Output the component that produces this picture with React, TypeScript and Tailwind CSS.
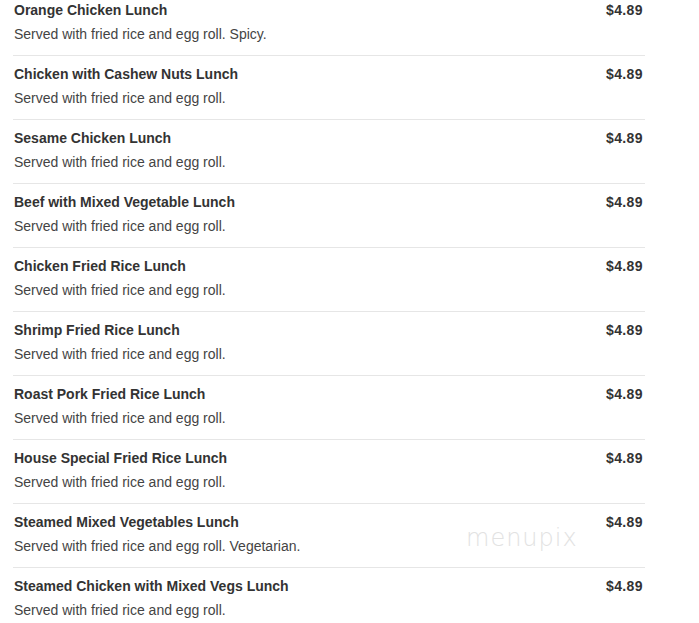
import React from "react";

const items: { name: string; desc: string }[] = [
  { name: "Orange Chicken Lunch", desc: "Served with fried rice and egg roll. Spicy." },
  { name: "Chicken with Cashew Nuts Lunch", desc: "Served with fried rice and egg roll." },
  { name: "Sesame Chicken Lunch", desc: "Served with fried rice and egg roll." },
  { name: "Beef with Mixed Vegetable Lunch", desc: "Served with fried rice and egg roll." },
  { name: "Chicken Fried Rice Lunch", desc: "Served with fried rice and egg roll." },
  { name: "Shrimp Fried Rice Lunch", desc: "Served with fried rice and egg roll." },
  { name: "Roast Pork Fried Rice Lunch", desc: "Served with fried rice and egg roll." },
  { name: "House Special Fried Rice Lunch", desc: "Served with fried rice and egg roll." },
  { name: "Steamed Mixed Vegetables Lunch", desc: "Served with fried rice and egg roll. Vegetarian." },
  { name: "Steamed Chicken with Mixed Vegs Lunch", desc: "Served with fried rice and egg roll." },
];

export default function App() {
  return (
    <div
      className="relative w-[699px] h-[623px] overflow-hidden bg-white"
      style={{ fontFamily: '"Liberation Sans", Arial, sans-serif' }}
    >
      <div className="ml-[13px] w-[632px] flex flex-col">
        {items.map((it, i) => (
          <div
            key={i}
            className={`flex justify-between ${i === 0 ? "pt-0" : "pt-[8px]"} pb-[11px] ${
              i === items.length - 1 ? "" : "border-b border-[#e6e6e6]"
            }`}
          >
            <div className="flex flex-col pl-[1px]">
              <div className="text-[14px] leading-[20px] font-bold text-[#333]">{it.name}</div>
              <div className="mt-[4px] text-[14px] leading-[20px] text-[#444]">{it.desc}</div>
            </div>
            <div className="text-[14px] leading-[20px] font-bold text-[#333] pr-[2px] tracking-[0.4px]">$4.89</div>
          </div>
        ))}
      </div>
      <div
        className="absolute left-[466px] top-[526px] text-[24px] leading-[24px] text-[#e2e2e2] tracking-[1px]"
        style={{ fontFamily: '"DejaVu Sans", sans-serif', fontWeight: 200 }}
      >
        menupix
      </div>
    </div>
  );
}
